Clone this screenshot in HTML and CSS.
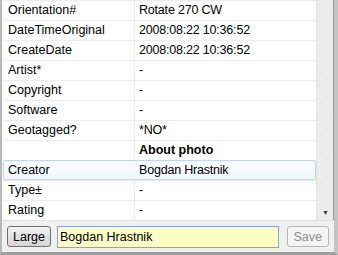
FILE: index.html
```html
<!DOCTYPE html>
<html lang="en">
<head>
    <meta charset="UTF-8">
    <title>Photo metadata</title>
    <link rel="stylesheet" href="styles.css">
</head>
<body>
    <div class="window">
        <div class="grid-area">
            <div class="table">
                <div class="row"><div class="key">Orientation#</div><div class="val">Rotate 270 CW</div></div>
                <div class="row"><div class="key">DateTimeOriginal</div><div class="val">2008:08:22 10:36:52</div></div>
                <div class="row"><div class="key">CreateDate</div><div class="val">2008:08:22 10:36:52</div></div>
                <div class="row"><div class="key">Artist*</div><div class="val">-</div></div>
                <div class="row"><div class="key">Copyright</div><div class="val">-</div></div>
                <div class="row"><div class="key">Software</div><div class="val">-</div></div>
                <div class="row"><div class="key">Geotagged?</div><div class="val">*NO*</div></div>
                <div class="row"><div class="key"></div><div class="val head">About photo</div></div>
                <div class="row selected"><div class="key">Creator</div><div class="val">Bogdan Hrastnik</div></div>
                <div class="row"><div class="key">Type±</div><div class="val">-</div></div>
                <div class="row"><div class="key">Rating</div><div class="val">-</div></div>
            </div>
            <div class="scrollbar">
                <span class="arrow">&#9660;</span>
            </div>
        </div>
        <div class="bottom">
            <button class="btn">Large</button>
            <input class="edit" type="text" value="Bogdan Hrastnik">
            <button class="btn" disabled>Save</button>
        </div>
    </div>
</body>
</html>
```

FILE: styles.css
```css
body {
    margin: 0;
    background: #f0f0f0;
    font-family: 'Liberation Sans', Arial, sans-serif;
    font-size: 12.5px;
    color: #000;
}
.window {
    width: 332px;
    height: 252px;
    border-left: 2px solid #b9b9b9;
    border-right: 4px solid #c4c4c4;
    border-bottom: 3px solid #9e9e9e;
    background: #f0f0f0;
    display: flex;
    flex-direction: column;
}
.grid-area {
    display: flex;
    height: 220px;
    background: #fff;
}
.table {
    flex: 1;
    overflow: hidden;
}
.row {
    display: grid;
    grid-template-columns: 131px 1fr;
    height: 19px;
    border-top: 1px solid #ececec;
    margin-left: 2px;
}
.key, .val {
    line-height: 19px;
    white-space: nowrap;
}
.key {
    padding-left: 4px;
    border-right: 1px solid #ececec;
}
.val {
    padding-left: 4px;
    letter-spacing: -0.2px;
}
.head {
    font-weight: bold;
    letter-spacing: 0;
}
.selected {
    border: 1px solid #b9d7fc;
    border-radius: 2px;
    height: 18px;
    background: linear-gradient(#fbfdff, #f1f7ff);
    margin-left: 1px;
}
.selected .key {
    border-right-color: transparent;
    padding-left: 4px;
    line-height: 18px;
}
.selected .val {
    line-height: 18px;
}
.scrollbar {
    width: 16px;
    border-left: 1px solid #e2e2e2;
    border-right: 1px solid #9a9a9a;
    background: repeating-linear-gradient(45deg, #e9e9e9 0 1px, #efefef 1px 2px);
    position: relative;
}
.arrow {
    position: absolute;
    bottom: 4px;
    left: 5px;
    font-size: 7px;
    color: #404040;
}
.bottom {
    flex: 1;
    display: flex;
    align-items: center;
    padding: 0 5px;
    gap: 6px;
    border-top: 1px solid #e0e0e0;
}
.btn {
    font-family: 'Liberation Sans', Arial, sans-serif;
    font-size: 12.5px;
    height: 21px;
    padding: 0 5px;
    border: 1px solid #707070;
    border-radius: 3px;
    background: linear-gradient(#f3f3f3, #e2e2e2 50%, #d6d6d6);
    color: #000;
}
.btn:disabled {
    border-color: #b5b5b5;
    background: #f4f4f4;
    color: #8c8c8c;
    margin-left: 2px;
    padding: 0 6px;
}
.edit {
    width: 229px;
    height: 22px;
    box-sizing: border-box;
    border: 1px solid #7fa9d4;
    background: #ffffc4;
    font-family: 'Liberation Sans', Arial, sans-serif;
    font-size: 12.5px;
    padding: 0 2px;
}
```
